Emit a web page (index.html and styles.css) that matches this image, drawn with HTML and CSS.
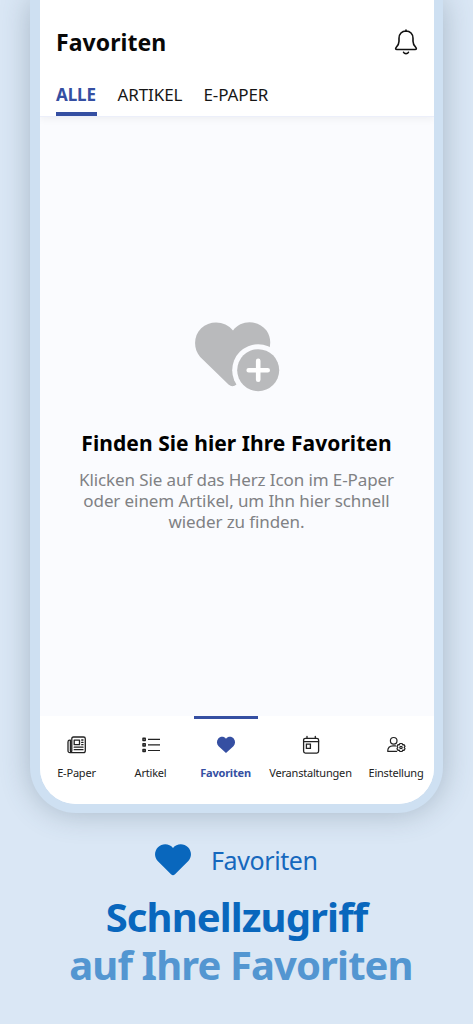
FILE: index.html
```html
<!DOCTYPE html>
<html lang="de">
<head>
<meta charset="utf-8">
<title>Favoriten</title>
<link rel="stylesheet" href="styles.css">
</head>
<body>
<main class="page">
  <div class="phone">
    <div class="screen">
      <header class="header">
        <div class="title-row">
          <h1 class="title"><span>Favoriten</span></h1>
          <svg class="bell" viewBox="0 0 24 26" fill="none" stroke="#111" stroke-width="1.6" stroke-linecap="round" stroke-linejoin="round">
            <path d="M12 1.100v1M12 2c-4.100 0-7 3.100-7 7.200v3.100c0 2.600-1 4.200-2.700 5.900-1.100 1.100-.8 2.300.6 2.300h18.200c1.400 0 1.700-1.200.6-2.300-1.700-1.700-2.700-3.300-2.700-5.900V9.200C19 5.100 16.100 2 12 2z"/>
            <path d="M9.600 23.300c.9 1.700 3.900 1.700 4.800 0"/>
          </svg>
        </div>
        <nav class="tabs">
          <a class="tab tab-active"><span>ALLE</span></a>
          <a class="tab tab-article"><span>ARTIKEL</span></a>
          <a class="tab tab-paper"><span>E-PAPER</span></a>
        </nav>
      </header>
      <section class="empty">
        <svg class="empty-icon" viewBox="0 0 86 70">
          <path fill="#b9babc" d="M38 8.500C30.500-1.300 15-2.200 6.200 6.300C-1.800 14-1.800 27 5.200 35L33.500 62.500Q37.500 66 41.500 62.500L69.500 35C76.500 28 77 16 71.500 8.500C63-2.500 46-2.500 38 8.500Z"/>
          <circle cx="63.200" cy="48.200" r="26" fill="#fafbfe"/>
          <circle cx="63.200" cy="48.200" r="21" fill="#b9babc"/>
          <path d="M53.700 48.200h19M63.200 38.700v19" stroke="#fff" stroke-width="4.600" stroke-linecap="round"/>
        </svg>
        <h2 class="empty-title"><span>Finden Sie hier Ihre Favoriten</span></h2>
        <p class="empty-text"><span>Klicken Sie auf das Herz Icon im E-Paper</span><br><span>oder einem Artikel, um Ihn hier schnell</span><br><span>wieder zu finden.</span></p>
      </section>
      <nav class="bottom-nav">
        <a class="nav-item nav-paper">
          <svg class="nav-icon" viewBox="0 0 20 20" fill="none" stroke="#222" stroke-width="1.300" stroke-linejoin="round" stroke-linecap="round">
            <path d="M4.800 3.700Q4.800 2 6.500 2h10q1.800 0 1.800 1.700v12q0 1.900-1.900 1.900H3q-2 0-2-2V6.900q0-1.700 1.700-1.700h.7v10.500q0 1.900 1.200 1.900M4.800 3.700v12q0 1.900-1.400 1.900"/>
            <path d="M7.200 5.100h5.300v4.600H7.200zM14.700 5h1.300M14.700 7.400h1.300M14.700 9.700h1.300M7.200 12.200h8.800M7.200 14.700h8.800"/>
          </svg>
          <span class="nav-label">E-Paper</span>
        </a>
        <a class="nav-item nav-article">
          <svg class="nav-icon" viewBox="0 0 20 20" fill="none" stroke="#222">
            <path stroke-width="1.200" d="M7 4.400h12M7 9.900h12M7 15.500h12"/>
            <path stroke-width="1.500" stroke-linejoin="round" d="M2 3.300h2.200v2.200H2zM2 8.800h2.200V11H2zM2 14.400h2.200v2.200H2z"/>
          </svg>
          <span class="nav-label">Artikel</span>
        </a>
        <a class="nav-item nav-favorites">
          <svg class="nav-icon" viewBox="0 0 20 20">
            <path fill="#354fa2" d="M10 3.700C7.900 1.200 4.200 1.300 2.300 3.600.3 5.900.6 9.200 2.600 11.200L10 17.900l7.400-6.700c2-2 2.300-5.300.3-7.600-1.900-2.300-5.600-2.400-7.700.1z"/>
          </svg>
          <span class="nav-label">Favoriten</span>
        </a>
        <a class="nav-item nav-events">
          <svg class="nav-icon" viewBox="0 0 20 20" fill="none" stroke="#222" stroke-width="1.300" stroke-linecap="round">
            <rect x="2.600" y="3.300" width="15" height="14.800" rx="1.800"/>
            <path d="M2.600 6.700h15M6 1.300v2M14.300 1.300v2M5.400 9.200h4v4.100h-4z"/>
          </svg>
          <span class="nav-label">Veranstaltungen</span>
        </a>
        <a class="nav-item nav-settings">
          <svg class="nav-icon" viewBox="0 0 20 20" fill="none" stroke="#222" stroke-width="1.200" stroke-linejoin="round" stroke-linecap="round">
            <circle cx="7.700" cy="5.800" r="3.300"/>
            <path d="M9.500 10.900H7q-5.300 0-5.300 5.400h9"/>
            <path d="M13.900 8.500h2.200l.5 1.300 1.400-.2 1 1.800-.8 1.100.8 1.100-1 1.800-1.400-.2-.5 1.300h-2.200l-.5-1.300-1.400.2-1-1.800.8-1.100-.8-1.100 1-1.800 1.400.2z"/>
            <circle cx="15" cy="12.500" r="1.200"/>
          </svg>
          <span class="nav-label">Einstellung</span>
        </a>
      </nav>
    </div>
  </div>
  <section class="promo">
    <div class="promo-caption">
      <svg class="promo-heart" viewBox="0 0 36 32"><path fill="#0967bd" d="M18 3.900C14.300-.8 7.200-1 3 3.200C-.9 7.200-.9 13.300 2.700 17L16 30.300Q18 32 20 30.300L33.300 17C36.900 13.300 36.900 7.200 33 3.200C28.800-1 21.700-.8 18 3.900Z"/></svg>
      <span class="promo-label">Favoriten</span>
    </div>
    <h2 class="headline"><span class="headline-main">Schnellzugriff</span><span class="headline-sub">auf Ihre Favoriten</span></h2>
  </section>
</main>
</body>
</html>
```
FILE: styles.css
```css
* { box-sizing: border-box; }

body {
  margin: 0;
  background: #dae7f5;
  font-family: "Noto Sans", sans-serif;
}

h1, h2, p { margin: 0; }

.page {
  width: 473px;
  height: 1024px;
  overflow: hidden;
}

.phone {
  width: 413px;
  height: 813px;
  margin-left: 30px;
  padding: 0 9.500px 9.500px;
  background: #cee0f2;
  border-radius: 0 0 46px 46px;
  box-shadow: 0 0 30px rgba(60, 80, 100, .32);
}

.screen {
  display: flex;
  flex-direction: column;
  height: 100%;
  overflow: hidden;
  background: #fafbfe;
  border-radius: 0 0 36px 36px;
}

.header {
  height: 117px;
  padding: 26px 16px 0 16.500px;
  background: #fff;
  border-bottom: 1px solid #eceffa;
  box-shadow: 0 2px 8px rgba(0, 0, 0, .05);
}

.title-row {
  display: flex;
  justify-content: space-between;
  height: 53px;
}

.title {
  font-size: 23px;
  line-height: 32px;
  letter-spacing: .07px;
  color: #080808;
}

.bell {
  width: 24px;
  height: 26px;
  margin-top: 3px;
}

.tabs {
  display: flex;
  height: 37px;
}

.tab {
  font-size: 17px;
  line-height: 32px;
  letter-spacing: -.1px;
  color: #161616;
  white-space: nowrap;
}

.tab-active {
  width: 40.500px;
  margin-right: 21px;
  border-bottom: 4.500px solid #354fa2;
  color: #354fa2;
  font-weight: 700;
}

.tab-article { width: 86px; }

.empty {
  flex: 1;
  display: flex;
  flex-direction: column;
  align-items: center;
  padding-top: 205px;
  text-align: center;
  white-space: nowrap;
}

.empty-icon {
  width: 86px;
  height: 70px;
  margin-left: 2px;
}

.empty-title {
  margin-top: 36px;
  font-size: 21px;
  line-height: 31px;
  letter-spacing: .06px;
  color: #000;
}

.empty-text {
  margin-top: 10px;
  font-size: 17px;
  line-height: 21px;
  letter-spacing: -.1px;
  color: #808184;
}

.bottom-nav {
  display: flex;
  height: 88px;
  padding-left: 5px;
  background: #fff;
}

.nav-item {
  display: flex;
  flex-direction: column;
  align-items: center;
  width: 64px;
  padding-top: 16px;
  border-top: 3px solid transparent;
  font-size: 11px;
  letter-spacing: -.2px;
  color: #222;
  white-space: nowrap;
}

.nav-article { margin-left: 10px; }
.nav-favorites {
  margin-left: 11px;
  border-color: #354fa2;
  color: #354fa2;
  font-weight: 700;
}
.nav-events { width: 84px; margin-left: 11px; }
.nav-settings { margin-left: 11.500px; }

.nav-icon {
  width: 20px;
  height: 20px;
}

.nav-label {
  margin-top: 9px;
  line-height: 18px;
}

.promo { padding-top: 29px; }

.promo-caption {
  display: flex;
  align-items: center;
  height: 36px;
  padding-left: 155px;
}

.promo-heart {
  width: 36px;
  height: 32px;
}

.promo-label {
  margin-left: 20px;
  color: #1668bd;
  font-size: 25px;
  line-height: 36px;
  letter-spacing: -.4px;
}

.headline {
  display: flex;
  flex-direction: column;
  align-items: center;
  margin-top: 15px;
  font-size: 40px;
  line-height: 48px;
  letter-spacing: -.9px;
  white-space: nowrap;
}

.headline-main { color: #0967bd; }
.headline-sub { margin-left: 9px; color: #5396d1; }
```
